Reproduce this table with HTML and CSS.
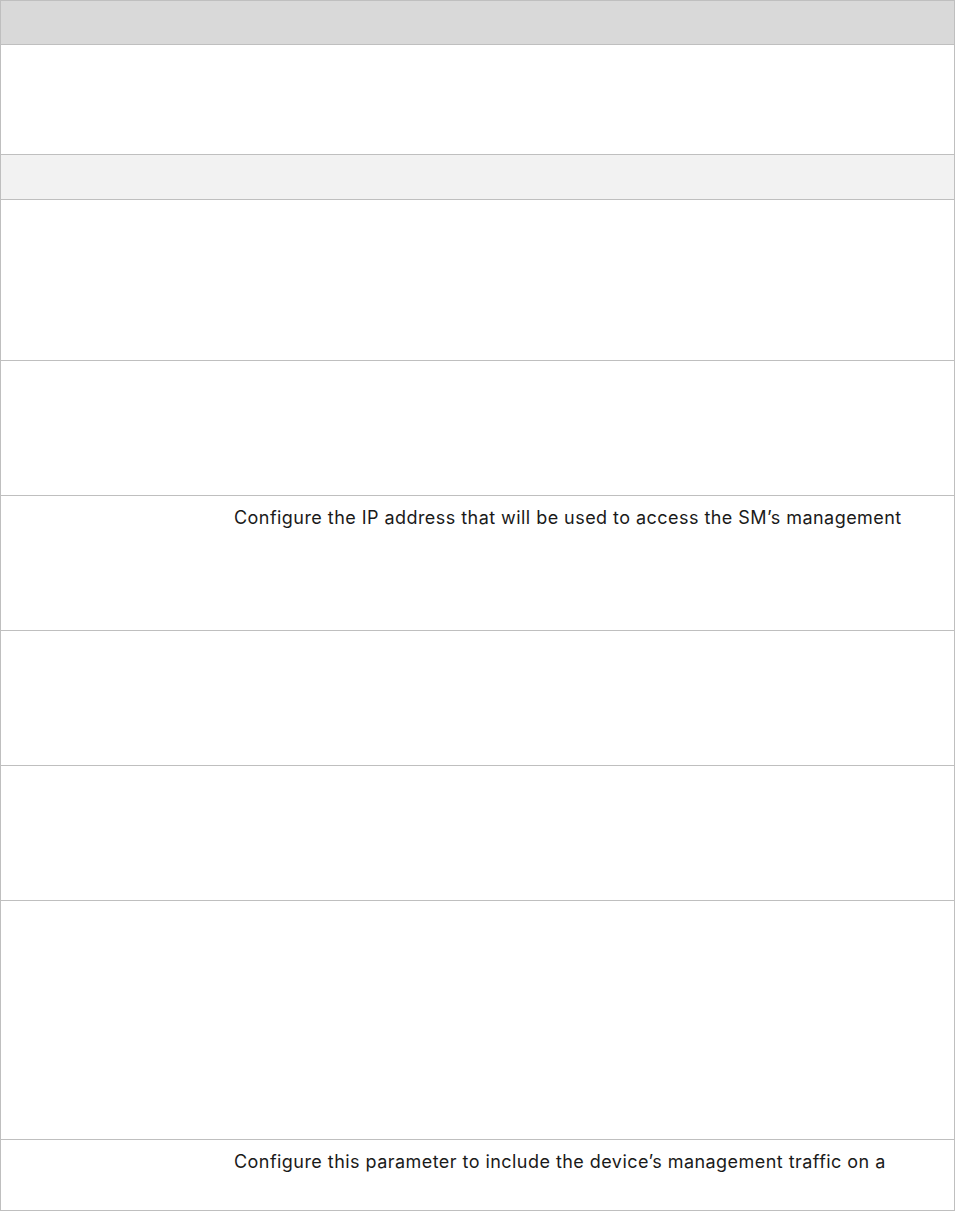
FILE: index.html
```html
<!DOCTYPE html>
<html>
<head>
<meta charset="utf-8">
<link rel="stylesheet" href="styles.css">
</head>
<body>
<div class="table">
  <div class="row head h44"><div class="c1"></div><div class="c2"></div></div>
  <div class="row h110"><div class="c1"></div><div class="c2"></div></div>
  <div class="row sub h45"><div class="c1"></div><div class="c2"></div></div>
  <div class="row h161"><div class="c1"></div><div class="c2"></div></div>
  <div class="row h135"><div class="c1"></div><div class="c2"></div></div>
  <div class="row h135"><div class="c1"></div><div class="c2"><p class="txt">Configure the IP address that will be used to access the SM’s management</p></div></div>
  <div class="row h135"><div class="c1"></div><div class="c2"></div></div>
  <div class="row h135"><div class="c1"></div><div class="c2"></div></div>
  <div class="row h239"><div class="c1"></div><div class="c2"></div></div>
  <div class="row last h70"><div class="c1"></div><div class="c2"><p class="txt">Configure this parameter to include the device’s management traffic on a</p></div></div>
</div>
</body>
</html>
```
FILE: styles.css
```css
html, body {
  margin: 0;
  padding: 0;
  background: #ffffff;
}
.table {
  width: 955px;
  box-sizing: border-box;
  border: 1px solid #bfbfbf;
  display: flex;
  flex-direction: column;
  font-family: Inter, "Open Sans", "Liberation Sans", sans-serif;
  color: #1a1a1a;
}
.row {
  display: grid;
  grid-template-columns: 220px 1fr;
  box-sizing: border-box;
  border-bottom: 1px solid #bfbfbf;
}
.row.last {
  border-bottom: none;
}
.head { background: #d9d9d9; }
.sub { background: #f2f2f2; }
.h44 { height: 44px; }
.h110 { height: 110px; }
.h45 { height: 45px; }
.h161 { height: 161px; }
.h135 { height: 135px; }
.h239 { height: 239px; }
.h70 { height: 70px; }
.c2 {
  padding-left: 13px;
  padding-top: 10px;
}
.txt {
  margin: 0;
  font-size: 18px;
  line-height: 24px;
  letter-spacing: 0.45px;
  white-space: nowrap;
}
```
